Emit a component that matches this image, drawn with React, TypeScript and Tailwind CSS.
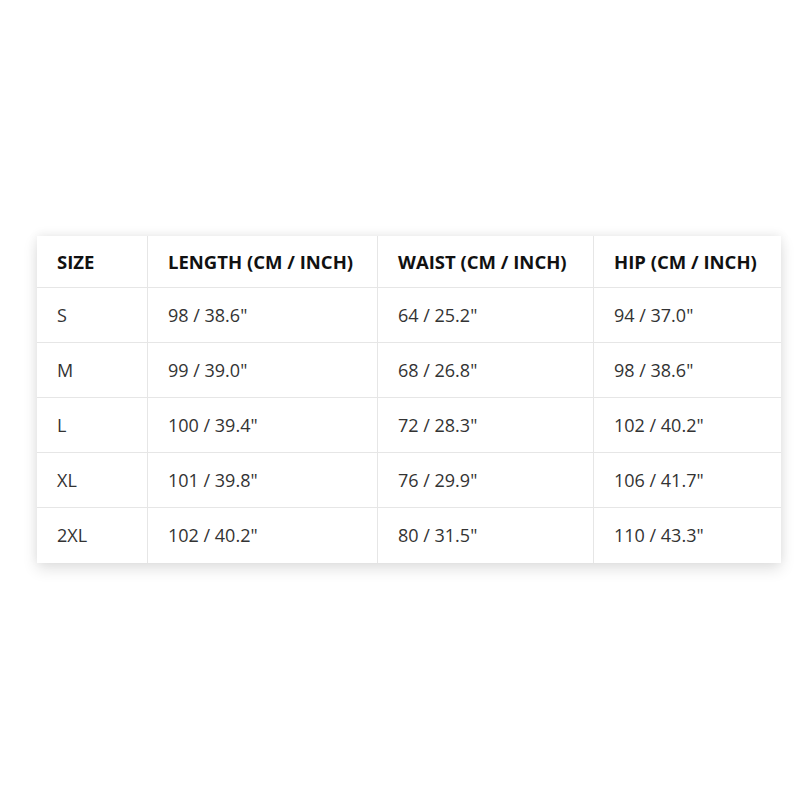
const HEADERS = ["SIZE", "LENGTH (CM / INCH)", "WAIST (CM / INCH)", "HIP (CM / INCH)"];

const ROWS = [
  ["S", "98 / 38.6\"", "64 / 25.2\"", "94 / 37.0\""],
  ["M", "99 / 39.0\"", "68 / 26.8\"", "98 / 38.6\""],
  ["L", "100 / 39.4\"", "72 / 28.3\"", "102 / 40.2\""],
  ["XL", "101 / 39.8\"", "76 / 29.9\"", "106 / 41.7\""],
  ["2XL", "102 / 40.2\"", "80 / 31.5\"", "110 / 43.3\""],
];

export default function App() {
  return (
    <div className="w-[800px] h-[800px] bg-white pt-[236px] pl-[37px] font-['Open_Sans',sans-serif]">
      <div className="w-[744px] bg-white shadow-[0_6px_14px_rgba(0,0,0,0.12),0_-2px_10px_rgba(0,0,0,0.06)]">
        <div className="grid grid-cols-[110px_230px_216px_188px] h-[52px] border-b border-[#e6e6e6]">
          {HEADERS.map((h, i) => (
            <div
              key={h}
              className={`flex items-center pl-5 text-[18.5px] font-bold text-[#111] ${i > 0 ? "border-l border-[#e6e6e6]" : ""}`}
            >
              {h}
            </div>
          ))}
        </div>
        {ROWS.map((row, r) => (
          <div
            key={row[0]}
            className={`grid grid-cols-[110px_230px_216px_188px] h-[55px] ${r < ROWS.length - 1 ? "border-b border-[#e6e6e6]" : ""}`}
          >
            {row.map((cell, i) => (
              <div
                key={i}
                className={`flex items-center pl-5 text-[18px] text-[#333] ${i > 0 ? "border-l border-[#e6e6e6]" : ""}`}
              >
                {cell}
              </div>
            ))}
          </div>
        ))}
      </div>
    </div>
  );
}
